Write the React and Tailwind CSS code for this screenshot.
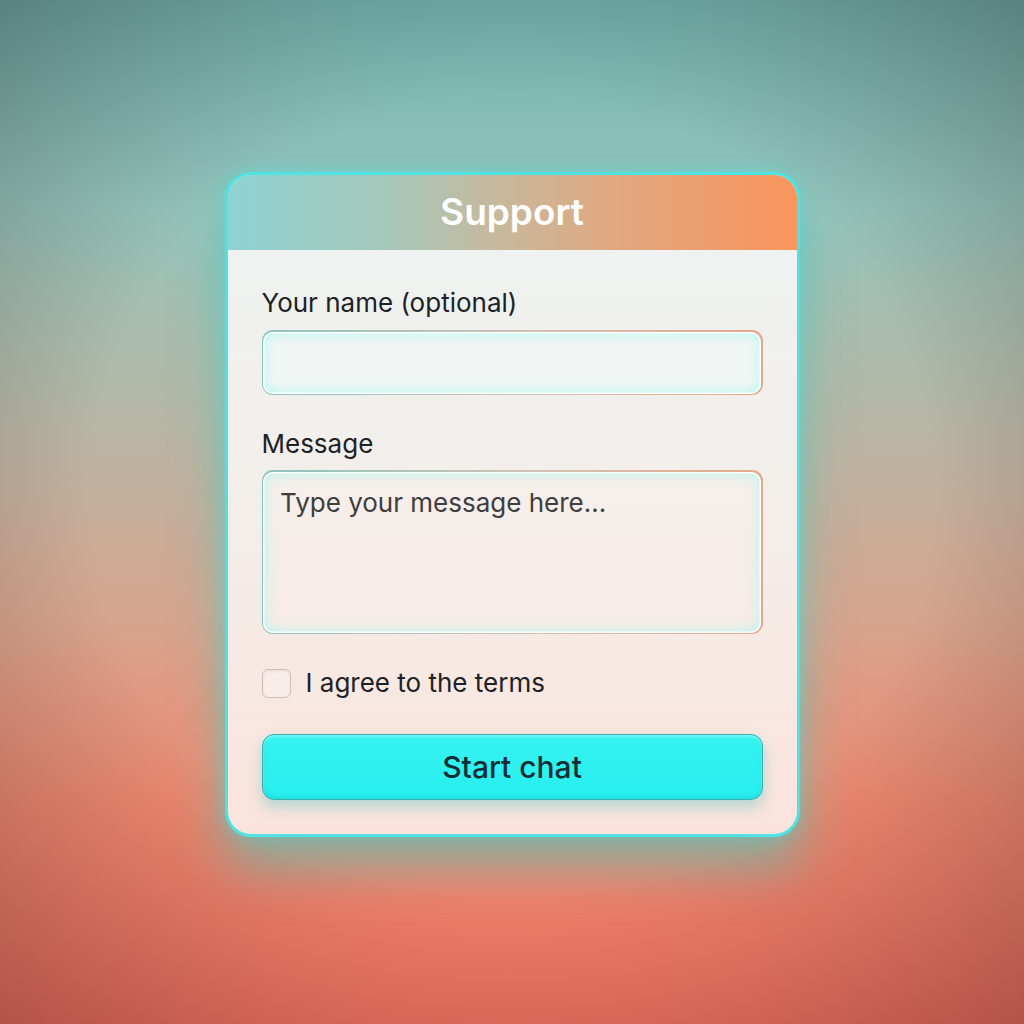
export default function App() {
  return (
    <div className="min-h-screen w-full flex justify-center pt-[172px] font-['Inter','Noto_Sans',sans-serif] bg-[radial-gradient(ellipse_75%_70%_at_50%_48%,rgba(0,0,0,0)_55%,rgba(40,20,20,0.34)_100%),linear-gradient(180deg,#70b3ad_0%,#94c4bb_20%,#b8b5a3_42%,#d6a58f_60%,#ee8a70_78%,#f87562_100%)]">
      <div className="w-[575px] h-[665px] rounded-[26px] border-[3px] border-[#4fe2e2] overflow-hidden flex flex-col shadow-[0_30px_50px_rgba(70,200,190,0.6),0_0_16px_rgba(80,230,230,0.45)] bg-[linear-gradient(180deg,#edf3f2_0%,#f3eeea_50%,#fbe3dc_100%)]">
        <div className="h-[75px] shrink-0 flex items-center justify-center bg-[linear-gradient(90deg,#8ed3d3_0%,#a6c8ba_28%,#c8b89c_48%,#e3a67e_70%,#f9955c_100%)]">
          <span className="text-white text-[37px] font-semibold leading-none pb-[2px]">Support</span>
        </div>
        <div className="flex flex-col px-[34px] pt-[38px]">
          <label className="text-[26px] leading-[30px] text-[#1e2227]">Your name (optional)</label>
          <div className="mt-[12px] h-[65px] rounded-[11px] p-[1.5px] bg-[linear-gradient(90deg,#8cc4bd,#d2c0b4_55%,#e6a88a)]">
            <div className="h-full w-full rounded-[10px] bg-[#f1f6f4] shadow-[inset_0_0_0_1.5px_rgba(255,255,255,0.9),inset_0_0_14px_rgba(160,250,242,0.95)]"></div>
          </div>
          <label className="mt-[34px] text-[26px] leading-[30px] text-[#1e2227]">Message</label>
          <div className="mt-[11px] h-[164px] rounded-[11px] p-[1.5px] bg-[linear-gradient(90deg,#8cc4bd,#d2c0b4_55%,#e6a88a)]">
            <div className="h-full w-full rounded-[10px] bg-[linear-gradient(180deg,#f5efeb,#f7ebe6)] shadow-[inset_0_0_0_1.5px_rgba(255,255,255,0.9),inset_0_0_14px_rgba(160,250,242,0.9)] px-[17px] pt-[14px]">
              <span className="text-[26px] leading-[34px] text-[#3e3e3e]">Type your message here...</span>
            </div>
          </div>
          <div className="mt-[34px] flex items-center gap-[15px]">
            <div className="w-[29px] h-[29px] rounded-[6px] border-[1.5px] border-[#cdbfb6] bg-[#f8ede8] shadow-[inset_0_1px_3px_rgba(0,0,0,0.08)]"></div>
            <span className="text-[26px] leading-[30px] text-[#1e2227]">I agree to the terms</span>
          </div>
          <button className="mt-[36px] h-[66px] w-full rounded-[12px] border border-[#3bb0b0] bg-[linear-gradient(180deg,#35f3f1_0%,#27eeee_100%)] shadow-[0_7px_14px_rgba(40,190,190,0.35),inset_0_2px_3px_rgba(255,255,255,0.35),inset_0_-2px_4px_rgba(0,120,120,0.15)] flex items-center justify-center">
            <span className="text-[30px] font-medium text-[#122e34] leading-none">Start chat</span>
          </button>
        </div>
      </div>
    </div>
  );
}
